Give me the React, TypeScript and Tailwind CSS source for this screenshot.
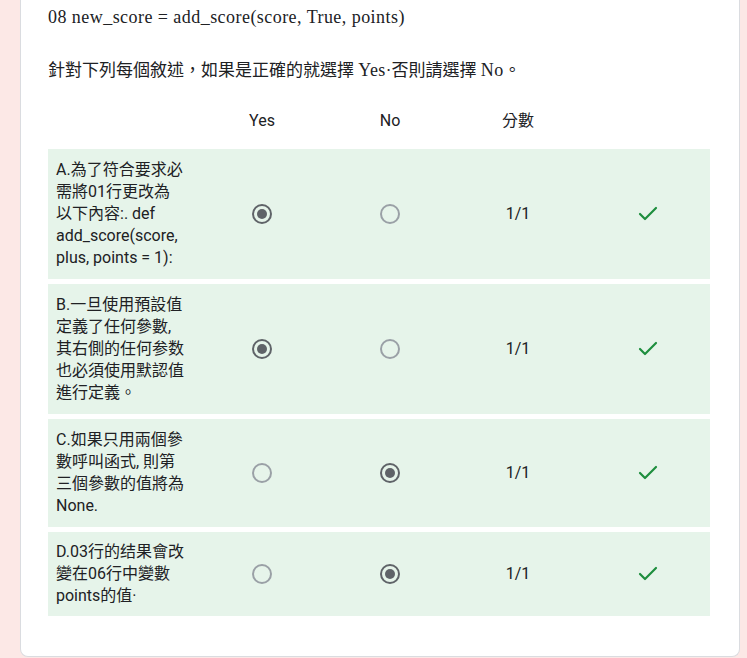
import { Check } from "lucide-react"

interface Row {
  text: string
  yes: boolean
  h: string
}

const rows: Row[] = [
  { text: "A.為了符合要求必需將01行更改為以下內容:. def add_score(score, plus, points = 1):", yes: true, h: "h-[130px]" },
  { text: "B.一旦使用預設值定義了任何參數,其右側的任何参数也必須使用默認值進行定義。", yes: true, h: "h-[130px]" },
  { text: "C.如果只用兩個參數呼叫函式, 則第三個參數的值將為None.", yes: false, h: "h-[108px]" },
  { text: "D.03行的结果會改變在06行中變數points的值·", yes: false, h: "h-[84px]" },
]

function Radio({ checked }: { checked: boolean }) {
  if (checked) {
    return (
      <span className="flex h-[20px] w-[20px] items-center justify-center rounded-full border-2 border-[#5f6368]">
        <span className="h-[10px] w-[10px] rounded-full bg-[#5f6368]" />
      </span>
    )
  }
  return <span className="block h-[20px] w-[20px] rounded-full border-2 border-[#9aa0a6]" />
}

export default function App() {
  return (
    <div className="h-[658px] overflow-hidden bg-[#fce8e6] pl-[20px] pr-[7px]">
      <div className="h-[657px] rounded-b-lg border border-t-0 border-[#dadce0] bg-white pl-[27px] text-[#202124]">
        <p className="pt-[6px] font-['Liberation_Serif','Noto_Sans_CJK_TC',serif] text-[18px] leading-[22px] tracking-[0.45px]">
          08 new_score = add_score(score, True, points)
        </p>
        <p className="mt-[30px] font-['Liberation_Serif','Noto_Sans_CJK_TC',serif] text-[17px] leading-[24px]">
          針對下列每個敘述，如果是正確的就選擇{" "}
          <span className="text-[18px] tracking-[0.45px]">Yes</span>·否則請選擇{" "}
          <span className="text-[18px] tracking-[0.45px]">No</span>。
        </p>

        <div className="mt-[18px] w-[662px] font-['Roboto','Noto_Sans_CJK_TC',sans-serif] text-[16px]">
          <div className="mb-[8px] grid h-[40px] grid-cols-[150px_128px_128px_128px_128px] items-center">
            <span />
            <span className="text-center">Yes</span>
            <span className="text-center">No</span>
            <span className="text-center">分數</span>
            <span />
          </div>

          <div className="flex flex-col gap-[5px]">
            {rows.map((r) => (
              <div
                key={r.text}
                className={`grid grid-cols-[150px_128px_128px_128px_128px] items-center bg-[#e6f4ea] ${r.h}`}
              >
                <p className="break-words pl-[8px] pr-[13px] leading-[22px]">{r.text}</p>
                <div className="flex justify-center">
                  <Radio checked={r.yes} />
                </div>
                <div className="flex justify-center">
                  <Radio checked={!r.yes} />
                </div>
                <span className="text-center">1/1</span>
                <div className="flex justify-center pl-[3px]">
                  <Check size={24} strokeWidth={2.2} className="text-[#1e8e3e]" />
                </div>
              </div>
            ))}
          </div>
        </div>
      </div>
    </div>
  )
}
